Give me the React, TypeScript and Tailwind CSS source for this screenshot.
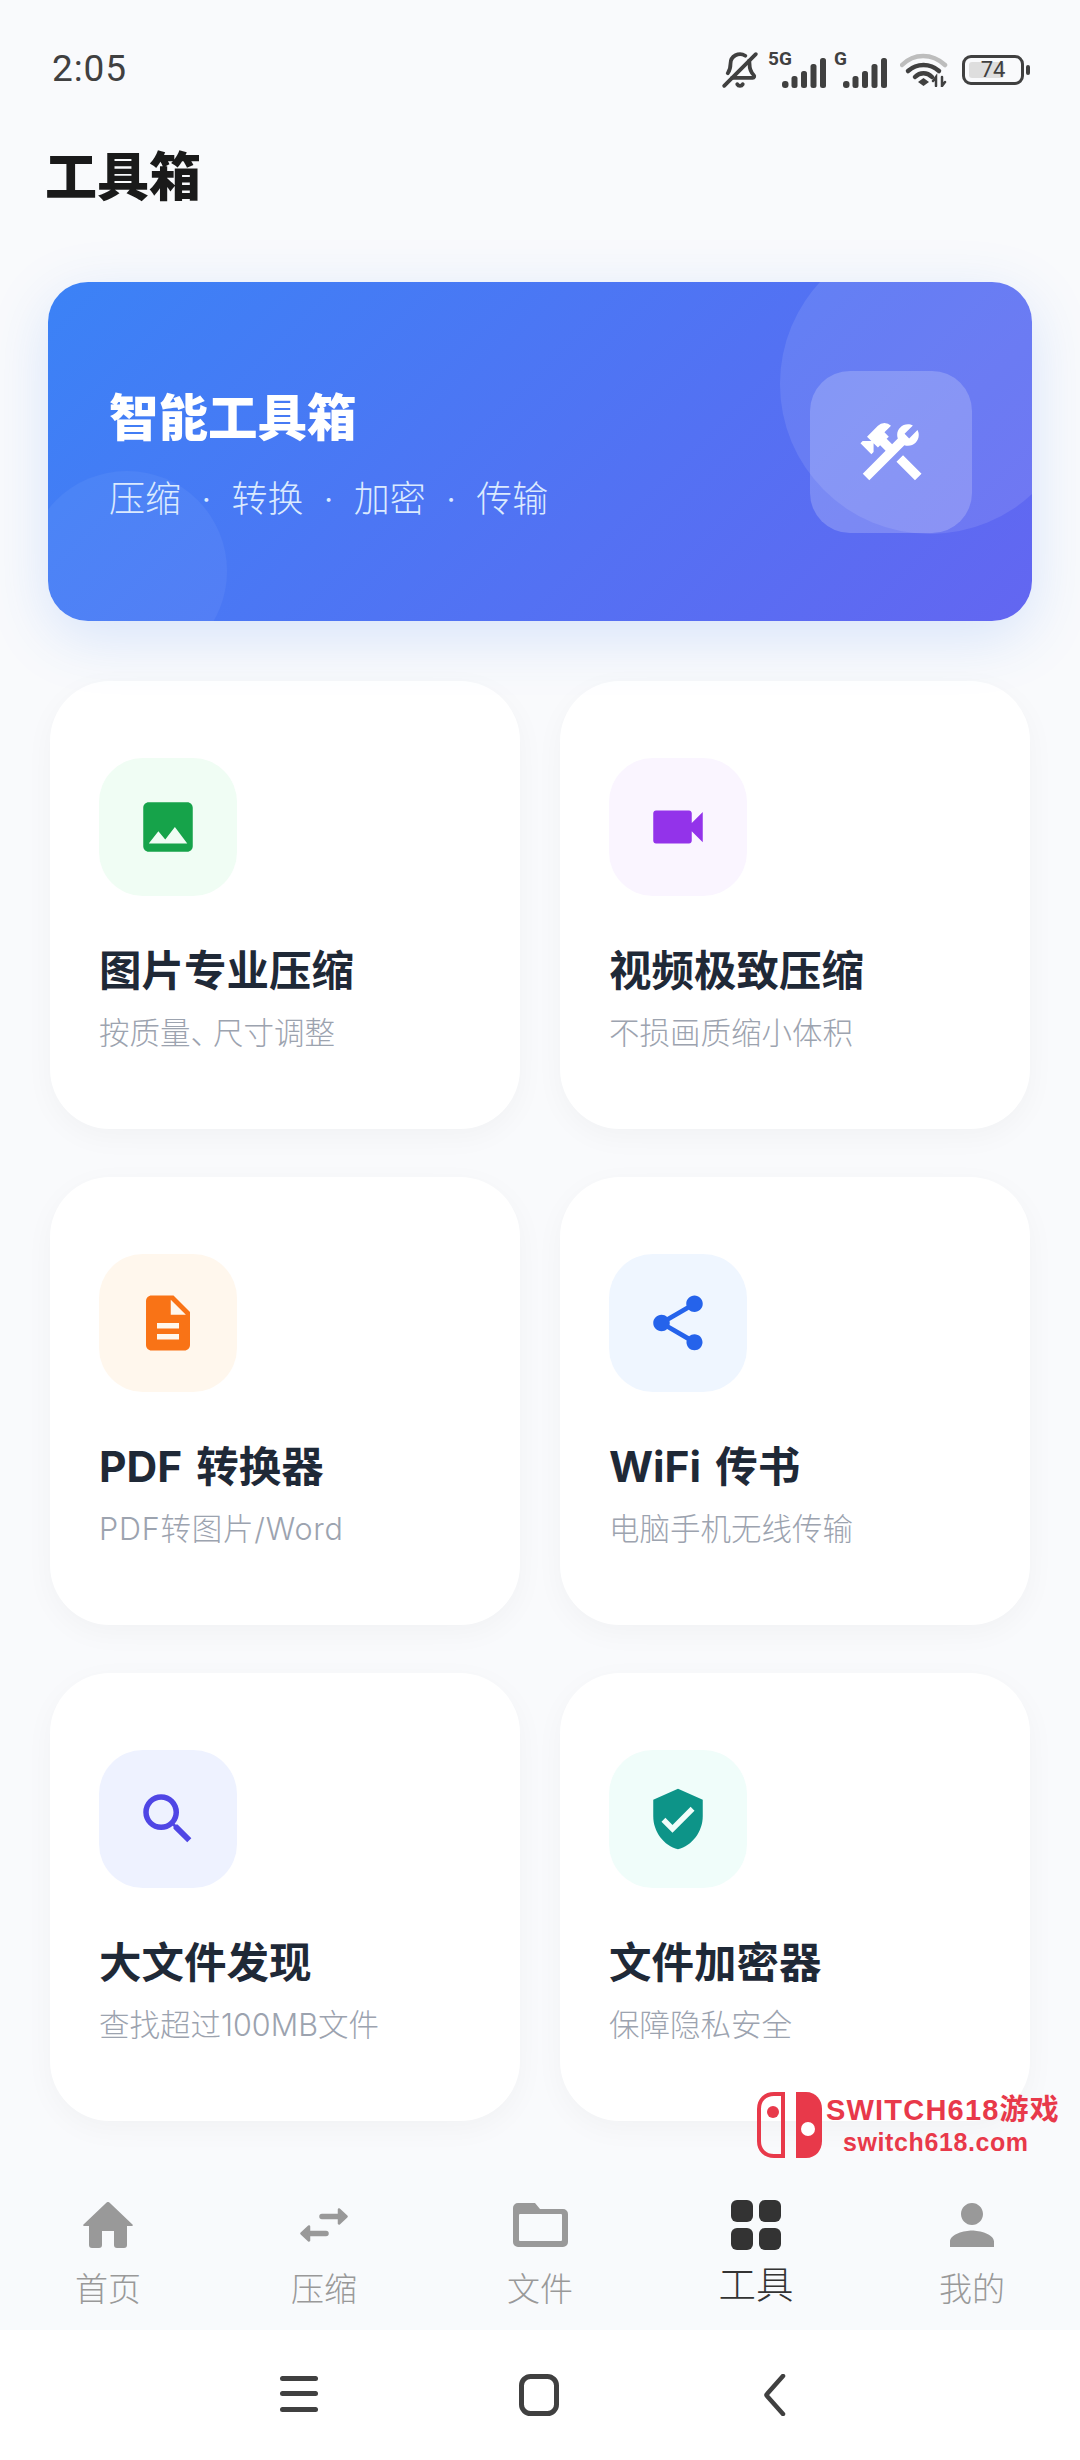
import { BellOff } from 'lucide-react';
import {
  MdConstruction,
  MdDescription,
  MdImage,
  MdPerson,
  MdSearch,
  MdShare,
  MdVerifiedUser,
  MdVideocam,
} from 'react-icons/md';
import type { ElementType, ReactNode } from 'react';

interface Tool {
  title: string;
  desc: ReactNode;
  icon: ElementType;
  tone: string;
}

const tools: Tool[] = [
  {
    title: '图片专业压缩',
    desc: <>按质量<span className="tracking-[-8px]">、</span>尺寸调整</>,
    icon: MdImage,
    tone: 'bg-[#f0fdf4] text-[#16a34a]',
  },
  { title: '视频极致压缩', desc: '不损画质缩小体积', icon: MdVideocam, tone: 'bg-[#faf5ff] text-[#9333ea]' },
  {
    title: 'PDF 转换器',
    desc: <span className="tracking-[0.8px]">PDF转图片/Word</span>,
    icon: MdDescription,
    tone: 'bg-[#fff7ed] text-[#f97316]',
  },
  { title: 'WiFi 传书', desc: '电脑手机无线传输', icon: MdShare, tone: 'bg-[#eff6ff] text-[#2563eb]' },
  { title: '大文件发现', desc: '查找超过100MB文件', icon: MdSearch, tone: 'bg-[#eef2ff] text-[#4f46e5]' },
  { title: '文件加密器', desc: '保障隐私安全', icon: MdVerifiedUser, tone: 'bg-[#f0fdfa] text-[#0d9488]' },
];

function Signal() {
  return (
    <svg width="44" height="30" viewBox="0 0 44 30" fill="#404040">
      <rect x="0" y="23" width="6.5" height="7" rx="3" />
      <rect x="9.5" y="18" width="6" height="12" rx="2.5" />
      <rect x="19" y="13" width="6" height="17" rx="2.5" />
      <rect x="28.5" y="6" width="6" height="24" rx="2.5" />
      <rect x="38" y="0" width="6" height="30" rx="2.5" />
    </svg>
  );
}

function Wifi() {
  return (
    <svg width="48" height="34" viewBox="0 0 48 34" fill="none" strokeLinecap="round">
      <path d="M2 12 C14 0 32 0 45 12" stroke="#bdbdbd" strokeWidth="4.5" />
      <path d="M8 18 C17 10 30 10 39 18" stroke="#404040" strokeWidth="4.5" />
      <path d="M15 24 C20 19 27 19 32 24" stroke="#404040" strokeWidth="4.5" />
      <path d="M18 29 L23.5 25 L29 29 L23.5 33 Z" fill="#404040" />
      <path d="M36 33 V24 L33 28 M42 24 V33 L45 29" stroke="#404040" strokeWidth="2.5" />
    </svg>
  );
}

function StatusBar() {
  return (
    <div className="flex h-[89px] shrink-0 items-end justify-between pl-[52px] pr-[50px] text-[#404040]">
      <span className="text-[37px] leading-[40px] font-['Roboto',sans-serif] tracking-wide">2:05</span>
      <div className="flex items-center">
        <BellOff size={38} strokeWidth={2.4} className="-scale-x-100" />
        <div className="relative ml-[9px] w-[58px] h-[36px] flex items-end justify-end">
          <span className="absolute left-0 -top-[2px] text-[19px] leading-[18px] font-bold font-['Roboto',sans-serif]">5G</span>
          <Signal />
        </div>
        <div className="relative ml-[8px] w-[53px] h-[36px] flex items-end justify-end">
          <span className="absolute left-0 -top-[2px] text-[19px] leading-[18px] font-bold font-['Roboto',sans-serif]">G</span>
          <Signal />
        </div>
        <div className="ml-[13px]">
          <Wifi />
        </div>
        <div className="ml-[14px] flex items-center gap-[2px]">
          <div className="relative flex h-[30px] w-[62px] items-center justify-center rounded-[9px] border-[3px] border-[#404040] p-[3px]">
            <div className="absolute left-[4px] top-[4px] bottom-[4px] w-[35px] rounded-[3px] bg-[#dedede]" />
            <span className="relative text-[22px] leading-none font-['Roboto',sans-serif]">74</span>
          </div>
          <div className="h-[10px] w-[4px] rounded-full bg-[#404040]" />
        </div>
      </div>
    </div>
  );
}

function Banner() {
  return (
    <div className="relative mx-[48px] mt-[72px] flex h-[339px] items-center justify-between overflow-hidden rounded-[40px] bg-[linear-gradient(135deg,#3b82f6,#6366f1)] pl-[61px] pr-[60px] shadow-[0_16px_60px_rgba(59,130,246,0.18)]">
      <div className="absolute -top-[48px] -right-[48px] h-[300px] w-[300px] rounded-full bg-white/10" />
      <div className="absolute -bottom-[50px] -left-[21px] h-[200px] w-[200px] rounded-full bg-white/5" />
      <div className="relative mt-[8px]">
        <h2 className="text-[49.5px] leading-[60px] font-black text-white">智能工具箱</h2>
        <p className="mt-[27px] text-[36px] leading-[48px] font-light text-[#dbeafe] whitespace-pre [word-spacing:10px]">压缩 · 转换 · 加密 · 传输</p>
      </div>
      <div className="relative flex h-[162px] w-[162px] items-center justify-center rounded-[40px] bg-white/20 text-white">
        <MdConstruction size={74} />
      </div>
    </div>
  );
}

function ToolCard({ tool }: { tool: Tool }) {
  const Icon = tool.icon;
  return (
    <div className="h-[448px] rounded-[60px] bg-white pl-[49px] pt-[77px] shadow-[0_8px_30px_rgba(15,23,42,0.035)]">
      <div className={`flex h-[138px] w-[138px] items-center justify-center rounded-[44px] ${tool.tone}`}>
        <Icon size={66} />
      </div>
      <h3 className="mt-[47px] text-[42.5px] leading-[56px] font-bold text-[#1f2937] [word-spacing:4px]">{tool.title}</h3>
      <p className="mt-[14px] text-[30.5px] leading-[40px] font-light text-[#9ca3af]">{tool.desc}</p>
    </div>
  );
}

function Watermark() {
  return (
    <div className="absolute left-[757px] top-[2092px] flex items-start text-[#e8394a]">
      <svg width="66" height="66" viewBox="0 0 66 66" className="shrink-0">
        <path d="M26 2 H17 C8 2 2 8 2 17 V49 C2 58 8 64 17 64 H26 Z" fill="none" stroke="#e8394a" strokeWidth="4" />
        <circle cx="16" cy="20" r="6" fill="#e8394a" />
        <path d="M39 0 H49 C59 0 65 8 65 17 V49 C65 58 59 66 49 66 H39 Z" fill="#e8394a" />
        <circle cx="51" cy="37" r="7" fill="#fff" />
      </svg>
      <div className="ml-[3px] mt-[2px] font-['Liberation_Sans','Noto_Sans_CJK_SC',sans-serif] font-bold">
        <div className="text-[29px] leading-[32px] tracking-[1.2px] whitespace-nowrap">SWITCH618游戏</div>
        <div className="ml-[17px] mt-[2px] text-[25px] leading-[28px] tracking-[0.6px] whitespace-nowrap">switch618.com</div>
      </div>
    </div>
  );
}

function HomeIcon() {
  return (
    <svg width="50" height="46" viewBox="0 0 50 46" fill="#999999">
      <path d="M23.6.6a2 2 0 0 1 2.8 0L49.5 22.5q.8 1-.5 1.5H44V43a3 3 0 0 1-3 3H34a3 3 0 0 1-3-3V29H19V43a3 3 0 0 1-3 3H9a3 3 0 0 1-3-3V24H1q-1.3-.5-.5-1.5Z" />
    </svg>
  );
}

function SwapIcon() {
  return (
    <svg width="48" height="34" viewBox="0 0 48 34" fill="#999999" stroke="#999999" strokeLinecap="round" strokeLinejoin="round">
      <path d="M22 8.5H40M8 25.5H26" strokeWidth="5.5" fill="none" />
      <path d="M39 1.5 46.5 8.5 39 15.5Z" strokeWidth="2.5" />
      <path d="M9 18.5 1.5 25.5 9 32.5Z" strokeWidth="2.5" />
    </svg>
  );
}

function FolderIcon() {
  return (
    <svg width="55" height="44" viewBox="0 0 55 44" fill="#999999" fillRule="evenodd">
      <path d="M5 0H22L27 6H50a5 5 0 0 1 5 5V39a5 5 0 0 1-5 5H5a5 5 0 0 1-5-5V5a5 5 0 0 1 5-5ZM7 11a1 1 0 0 0-1 1V37a1 1 0 0 0 1 1H48a1 1 0 0 0 1-1V12a1 1 0 0 0-1-1Z" />
    </svg>
  );
}

function GridIcon() {
  return (
    <svg width="50" height="50" viewBox="0 0 50 50" fill="#333333">
      <rect x="0" y="0" width="22" height="22" rx="6" />
      <rect x="28" y="0" width="22" height="22" rx="6" />
      <rect x="0" y="28" width="22" height="22" rx="6" />
      <rect x="28" y="28" width="22" height="22" rx="6" />
    </svg>
  );
}

function BottomNav() {
  const items = [
    { label: '首页', icon: <HomeIcon /> },
    { label: '压缩', icon: <SwapIcon /> },
    { label: '文件', icon: <FolderIcon /> },
    { label: '工具', icon: <GridIcon />, active: true },
    { label: '我的', icon: <MdPerson size={66} /> },
  ];

  return (
    <nav className="grid h-[160px] shrink-0 grid-cols-5 bg-[#f8fafc]">
      {items.map((item) => (
        <div key={item.label} className={`flex flex-col items-center pt-[22px] ${item.active ? 'text-[#333333]' : 'text-[#999999]'}`}>
          <div className="flex h-[66px] items-center justify-center">{item.icon}</div>
          {item.active ? (
            <span className="mt-[4px] text-[37.5px] leading-[46px] font-light">{item.label}</span>
          ) : (
            <span className="mt-[9px] text-[33px] leading-[44px] font-light">{item.label}</span>
          )}
        </div>
      ))}
    </nav>
  );
}

function SystemBar() {
  return (
    <div className="flex h-[130px] shrink-0 items-start justify-center gap-[200px] bg-white pt-[44px] pr-[2px]">
      <svg width="40" height="40" viewBox="0 0 40 40" fill="#404040">
        <rect x="1" y="2" width="38" height="5" rx="2.5" />
        <rect x="1" y="17" width="38" height="5" rx="2.5" />
        <rect x="1" y="33" width="38" height="5" rx="2.5" />
      </svg>
      <svg width="40" height="42" viewBox="0 0 40 42" fill="none" stroke="#404040" strokeWidth="5">
        <rect x="2.5" y="2.5" width="35" height="37" rx="9" />
      </svg>
      <svg width="40" height="42" viewBox="0 0 40 42" fill="none" stroke="#404040" strokeWidth="4.5" strokeLinecap="round" strokeLinejoin="round">
        <path d="M24 2 L8 20 Q7 21 8 22 L24 40" />
      </svg>
    </div>
  );
}

export default function App() {
  return (
    <div className="relative flex h-[2460px] w-[1080px] flex-col overflow-hidden bg-[#f9fafc] font-['Inter','Noto_Sans_CJK_SC',sans-serif]">
      <StatusBar />
      <main className="min-h-0 flex-1 overflow-hidden">
        <h1 className="ml-[45px] mt-[57px] text-[52px] leading-[64px] font-black text-[#1a1a1a]">工具箱</h1>
        <Banner />
        <div className="mt-[60px] grid grid-cols-2 gap-x-[40px] gap-y-[48px] px-[50px] pb-[60px]">
          {tools.map((tool) => (
            <ToolCard key={tool.title} tool={tool} />
          ))}
        </div>
      </main>
      <BottomNav />
      <SystemBar />
      <Watermark />
    </div>
  );
}
